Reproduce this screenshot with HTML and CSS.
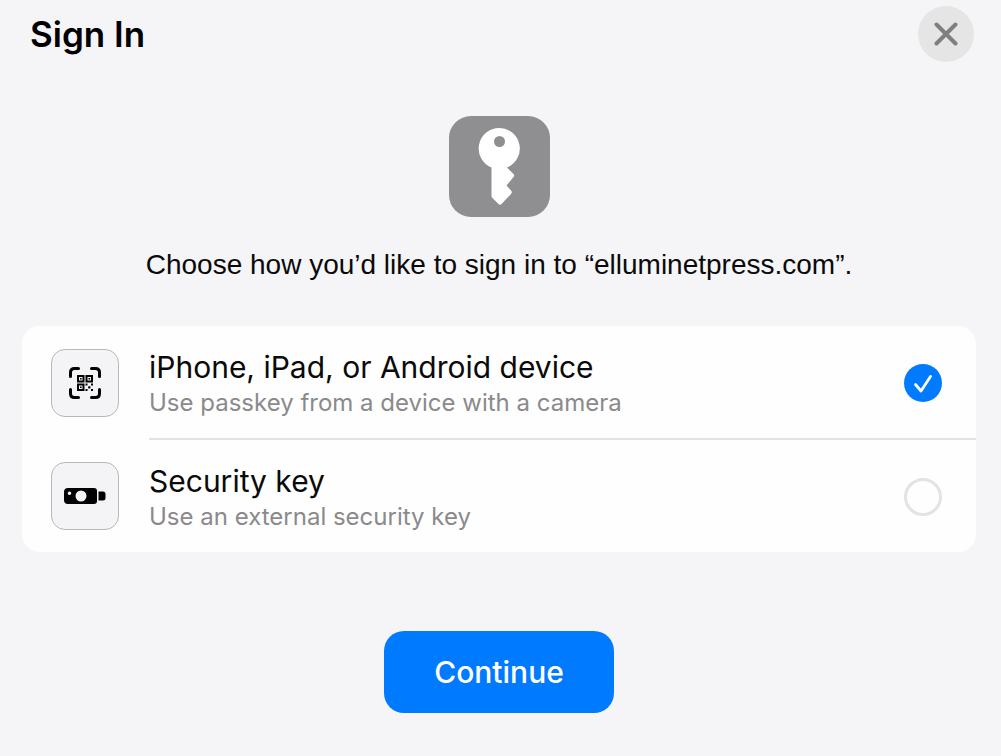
FILE: index.html
```html
<!DOCTYPE html>
<html lang="en">
<head>
    <meta charset="UTF-8">
    <meta name="viewport" content="width=device-width, initial-scale=1.0">
    <title>Sign In</title>
    <link rel="stylesheet" href="styles.css">
</head>
<body>
    <header class="header">
        <h1>Sign In</h1>
        <button class="close-button" type="button" aria-label="Close">
            <svg width="24" height="24" viewBox="0 0 24 24" aria-hidden="true">
                <path d="M2.5 2.5 21.5 21.5M21.5 2.5 2.5 21.5" fill="none" stroke="#7f7f82" stroke-width="4" stroke-linecap="round"/>
            </svg>
        </button>
    </header>
    <form class="sign-in">
        <div class="key-icon">
            <svg width="101" height="101" viewBox="0 0 101 101" aria-hidden="true">
                <path fill="#fff" fill-rule="evenodd" d="M50.5 12a20.5 20.5 0 0 1 7.500 39.500l6.500 6.500q1.400 1.500 0 3L57.500 69.500l4.500 5q1.500 1.700 0 3.400L52.500 88q-1.500 1.300-3 0L43.500 82q-1-1-1-2.500V51.500A20.500 20.500 0 0 1 50.500 12ZM50.500 20a5.500 5.500 0 1 0 0 11 5.500 5.500 0 0 0 0-11Z"/>
            </svg>
        </div>
        <p class="prompt">Choose how you’d like to sign in to “elluminetpress.com”.</p>

        <div class="options">
            <label class="option" for="device">
                <span class="option-icon">
                    <svg width="32" height="32" viewBox="0 0 32 32" aria-hidden="true">
                        <path d="M1.500 9.500V5.500Q1.500 1.500 5.500 1.500H9.500M22.500 1.500H26.500Q30.500 1.500 30.500 5.500V9.500M30.500 22.500V26.500Q30.500 30.500 26.500 30.500H22.500M9.500 30.500H5.500Q1.500 30.500 1.500 26.500V22.500" fill="none" stroke="#000" stroke-width="3" stroke-linecap="round"/>
                        <path d="M9 9h5.500v5.500H9zM17.500 9H23v5.500h-5.500zM9 17.500h5.500V23H9z" fill="none" stroke="#000" stroke-width="2"/>
                        <path d="M11 11h1.600v1.600H11zM19.500 11h1.600v1.600h-1.600zM11 19.500h1.600v1.600H11zM16.500 16.500h2v2h-2zM22 16.500h2v2h-2zM19.200 19.200h2.200v2.200h-2.200zM16.500 22h2v2h-2zM22 22h2v2h-2z"/>
                    </svg>
                </span>
                <span class="option-body">
                    <span class="option-text">
                        <span class="option-title">iPhone, iPad, or Android device</span>
                        <span class="option-hint">Use passkey from a device with a camera</span>
                    </span>
                    <input type="radio" id="device" name="method" value="device" checked>
                </span>
            </label>
            <label class="option" for="security-key">
                <span class="option-icon">
                    <svg width="42" height="18" viewBox="0 0 42 18" aria-hidden="true">
                        <path fill-rule="evenodd" d="M4 1H30q3 0 3 3V14q0 3-3 3H4Q0 17 0 13V5Q0 1 4 1ZM17 3.500a5.500 5.500 0 1 0 0 11 5.500 5.500 0 0 0 0-11ZM5.500 4.500a1.800 1.800 0 1 0 0 3.600 1.800 1.800 0 0 0 0-3.600Z"/>
                        <path d="M34.500 4.500H39q2.500 0 2.500 2.500v4q0 2.500-2.500 2.500h-4.500Z"/>
                    </svg>
                </span>
                <span class="option-body">
                    <span class="option-text">
                        <span class="option-title">Security key</span>
                        <span class="option-hint">Use an external security key</span>
                    </span>
                    <input type="radio" id="security-key" name="method" value="security-key">
                </span>
            </label>
        </div>

        <button class="continue-button" type="button">Continue</button>
    </form>
</body>
</html>
```
FILE: styles.css
```css
* {
    box-sizing: border-box;
}
body {
    font-family: Inter, "Liberation Sans", sans-serif;
    margin: 0;
    background-color: #f5f5f7;
    color: #0a0a0a;
}
.header {
    display: flex;
    justify-content: space-between;
    align-items: center;
    padding: 6px 27px 0 30px;
}
h1 {
    margin: 0;
    font-size: 35px;
    line-height: 44px;
    font-weight: 600;
    color: #000;
}
.close-button {
    display: flex;
    align-items: center;
    justify-content: center;
    width: 56px;
    height: 56px;
    padding: 0;
    border: none;
    border-radius: 50%;
    background-color: #e5e5e6;
    cursor: pointer;
}
.sign-in {
    display: flex;
    flex-direction: column;
    align-items: center;
    padding: 54px 25px 40px 22px;
}
.key-icon {
    height: 101px;
    border-radius: 22px;
    background-color: #8f8f92;
}
.prompt {
    margin: 31px 0 45px;
    font-family: "Liberation Sans", Arial, sans-serif;
    font-size: 28px;
    line-height: 33px;
    text-align: center;
}

/* Sign in methods */
.options {
    width: 100%;
    border-radius: 18px;
    background-color: #fefefe;
}
.option {
    display: flex;
    align-items: center;
    gap: 30px;
    padding-left: 29px;
    cursor: pointer;
}
.option-icon {
    display: flex;
    align-items: center;
    justify-content: center;
    width: 68px;
    height: 68px;
    margin-top: 2px;
    border: 1px solid #b8b8bc;
    border-radius: 14px;
    background-color: #f4f4f6;
}
.option-body {
    display: flex;
    flex: 1;
    align-items: center;
    justify-content: space-between;
    padding: 22px 34px 20px 0;
}
.option + .option .option-body {
    border-top: 2px solid #e3e3e5;
}
.option-title,
.option-hint {
    display: block;
}
.option-title {
    font-size: 30px;
    line-height: 39px;
}
.option-hint {
    font-size: 24px;
    line-height: 31px;
    color: #8a8a8c;
}
.option input {
    appearance: none;
    flex: none;
    width: 38px;
    height: 38px;
    margin: 0;
    border: 3px solid #e3e3e4;
    border-radius: 50%;
    cursor: pointer;
}
.option input:checked {
    border: none;
    background: #007aff url("data:image/svg+xml,%3Csvg xmlns='http://www.w3.org/2000/svg' viewBox='0 0 38 38'%3E%3Cpath d='M11.500 20.500 17 27 26.500 12.500' fill='none' stroke='white' stroke-width='2.800' stroke-linecap='round' stroke-linejoin='round'/%3E%3C/svg%3E") center / contain no-repeat;
}
.continue-button {
    margin-top: 79px;
    padding: 22px 50px;
    border: none;
    border-radius: 20px;
    background-color: #007aff;
    color: #fff;
    font-family: inherit;
    font-size: 30px;
    line-height: 38px;
    font-weight: 500;
    cursor: pointer;
}
```
